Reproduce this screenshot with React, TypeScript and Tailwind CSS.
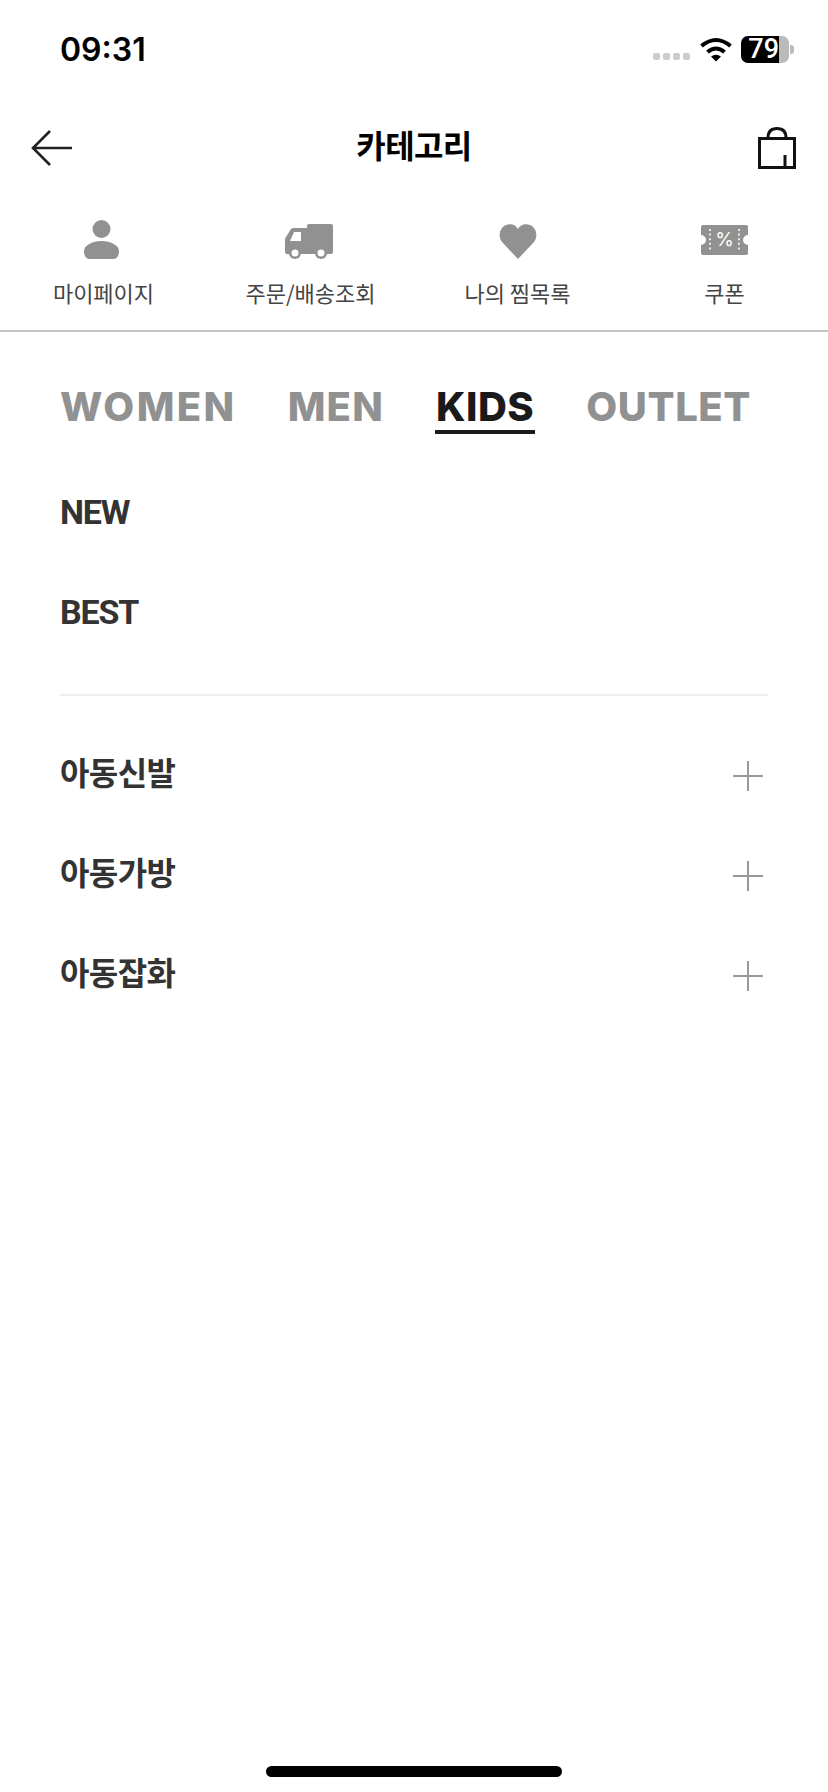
const korean = "font-['Noto_Sans_CJK_KR','Liberation_Sans',sans-serif]";

const shortcuts = [
  { label: "마이페이지", icon: <PersonIcon /> },
  { label: "주문/배송조회", icon: <TruckIcon /> },
  { label: "나의 찜목록", icon: <HeartIcon /> },
  { label: "쿠폰", icon: <TicketIcon /> },
];

const tabs = [
  { name: "WOMEN", className: "tracking-[2.4px] text-[#919191]" },
  { name: "MEN", className: "tracking-[1.2px] text-[#919191]" },
  { name: "KIDS", className: "tracking-[0.5px] border-b-4 border-[#1a1a1a] px-[1px] text-[#1a1a1a]" },
  { name: "OUTLET", className: "tracking-[0.6px] text-[#919191]" },
];

function PersonIcon() {
  return (
    <svg width="36" height="40" viewBox="0 0 36 40" fill="#919191" className="mr-[4px]">
      <circle cx="17.5" cy="9" r="9" />
      <path d="M0 31C0 25.5 8 21 17.5 21S35 25.5 35 31C35 36 33 39 29 39H6C2 39 0 36 0 31Z" />
    </svg>
  );
}

function TruckIcon() {
  return (
    <svg width="48" height="36" viewBox="0 0 48 36" className="mr-[3px] mt-[4px]">
      <path
        fill="#919191"
        d="M22 2Q22 0 24 0H46Q48 0 48 2V28Q48 30 46 30H2Q0 30 0 28V16Q0 14 1 13L6 5Q7 4 9 4H22Z"
      />
      <path fill="#fff" d="M9 8H16V17H5Z" />
      <circle cx="10" cy="29" r="6" fill="#919191" />
      <circle cx="36" cy="29" r="6" fill="#919191" />
      <circle cx="10" cy="29" r="3.5" fill="#fff" />
      <circle cx="36" cy="29" r="3.5" fill="#fff" />
    </svg>
  );
}

function HeartIcon() {
  return (
    <svg width="38" height="36" viewBox="0 0 38 36" fill="#919191" className="mt-[4px]">
      <path d="M19 35L3 18C-1 13 0 4 7 1C12-1 17 1 19 5C21 1 26-1 31 1C38 4 39 13 35 18Z" />
    </svg>
  );
}

function TicketIcon() {
  return (
    <svg width="47" height="30" viewBox="0 0 47 30" className="mt-[5px]">
      <path
        fill="#919191"
        d="M2 0H45A2 2 0 0 1 47 2V10A5 5 0 0 0 47 20V28A2 2 0 0 1 45 30H2A2 2 0 0 1 0 28V20A5 5 0 0 0 0 10V2A2 2 0 0 1 2 0Z"
      />
      <path d="M9 4V27M38 4V27" stroke="#fff" strokeWidth="1.6" strokeDasharray="2 2.6" />
      <text x="23.5" y="21" textAnchor="middle" fontSize="19" fill="#fff" fontFamily="Inter, sans-serif">
        %
      </text>
    </svg>
  );
}

function WifiIcon() {
  return (
    <svg width="32" height="25" viewBox="0 0 32 25" fill="none" stroke="#000" strokeWidth="4">
      <path d="M1.5 9Q16-3 30.5 9" />
      <path d="M7.5 15Q16 8 24.5 15" />
      <path d="M16 24.5L11 19.5Q16 16 21 19.5Z" fill="#000" stroke="none" />
    </svg>
  );
}

function PlusIcon() {
  return (
    <svg width="30" height="30" viewBox="0 0 30 30" stroke="#999" strokeWidth="2" className="mt-[4px]">
      <path d="M15 0V30M0 15H30" />
    </svg>
  );
}

export default function App() {
  return (
    <div className="flex h-[1792px] w-full flex-col overflow-hidden bg-white">
      {/* 상태바 */}
      <div className="flex h-[100px] items-start pl-[60px] pt-[30px]">
        <span className="font-['Inter',sans-serif] text-[32px] leading-[39px] font-semibold text-black">
          09:31
        </span>
        <div className="ml-auto mt-[6px] flex items-start pr-[34px]">
          <div className="mt-[17px] flex gap-[3px]">
            <span className="h-[7px] w-[7px] rounded-[2px] bg-[#cccccc]" />
            <span className="h-[7px] w-[7px] rounded-[2px] bg-[#cccccc]" />
            <span className="h-[7px] w-[7px] rounded-[2px] bg-[#cccccc]" />
            <span className="h-[7px] w-[7px] rounded-[2px] bg-[#cccccc]" />
          </div>
          <div className="ml-[10px] mt-[1px]">
            <WifiIcon />
          </div>
          <div className="ml-[9px] flex h-[27px]">
            <div className="flex w-[38px] items-center justify-end rounded-l-[7px] bg-black font-['Roboto',sans-serif] text-[27px] font-medium text-white">
              79
            </div>
            <div className="w-[10px] rounded-r-[7px] bg-[#bbbbbb]" />
          </div>
          <div className="ml-[1px] mt-[9px] h-[9px] w-[4px] rounded-r-[3px] bg-[#bbbbbb]" />
        </div>
      </div>

      {/* 헤더 */}
      <div className="grid h-[96px] grid-cols-[1fr_auto_1fr] items-center pl-[31px] pr-[33px]">
        <svg width="42" height="36" viewBox="0 0 42 36" fill="none" stroke="#222" strokeWidth="2.6">
          <path d="M41 18H2M19 1L2 18L19 35" />
        </svg>
        <h1 className={`${korean} mb-[8px] ml-[2px] text-[32px] leading-[40px] font-bold tracking-[-0.6px] text-black`}>
          카테고리
        </h1>
        <svg width="38" height="42" viewBox="0 0 38 42" fill="none" stroke="#111" strokeWidth="3" className="ml-auto mr-[-1px]">
          <path d="M1.5 11.5H36.5V40.5H1.5Z" />
          <path d="M10 11C10 4 14 1.500 19 1.500S28 4 28 11" />
          <path d="M27 40V28" />
        </svg>
      </div>

      {/* 바로가기 */}
      <div className="grid h-[134px] grid-cols-4 pt-[24px]">
        {shortcuts.map((item) => (
          <div key={item.label} className="flex flex-col items-center">
            <div className="flex h-[40px] items-start">{item.icon}</div>
            <span className={`${korean} mt-[17px] text-[22px] leading-[30px] text-[#444444]`}>{item.label}</span>
          </div>
        ))}
      </div>
      <div className="h-[2px] bg-[#c4c4c4]" />

      {/* 탭 */}
      <div className="flex items-start gap-[51px] pl-[60px] pt-[52px]">
        {tabs.map((tab) => (
          <span
            key={tab.name}
            className={`font-['Inter',sans-serif] text-[40px] leading-[46px] font-extrabold ${tab.className}`}
          >
            {tab.name}
          </span>
        ))}
      </div>

      {/* 메뉴 */}
      <div className="mt-[28px] flex flex-col px-[60px]">
        <div className="flex h-[100px] items-center font-['Roboto',sans-serif] text-[34px] font-bold tracking-[-1.2px] text-[#333333]">
          NEW
        </div>
        <div className="flex h-[100px] items-center font-['Roboto',sans-serif] text-[34px] font-bold tracking-[-1.2px] text-[#333333]">
          BEST
        </div>
        <div className="mt-[32px] h-[2px] bg-[#eeeeee]" />
        <div className="mt-[28px] flex flex-col">
          {["아동신발", "아동가방", "아동잡화"].map((name) => (
            <div key={name} className="flex h-[100px] items-center justify-between pr-[5px]">
              <span className={`${korean} mb-[7px] text-[32px] font-bold tracking-[-0.6px] text-[#333333]`}>{name}</span>
              <PlusIcon />
            </div>
          ))}
        </div>
      </div>

      {/* 홈 인디케이터 */}
      <div className="mx-auto mb-[15px] mt-auto h-[11px] w-[296px] rounded-full bg-black" />
    </div>
  );
}
